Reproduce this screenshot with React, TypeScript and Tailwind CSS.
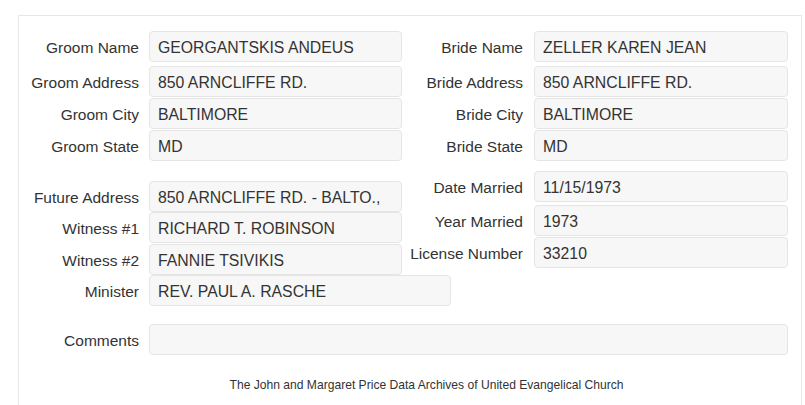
import React from "react";

const font = { fontFamily: '"Liberation Sans", Arial, sans-serif' };

function Box({ value, w }: { value: string; w: string }) {
  return (
    <div
      className={`${w} h-[31px] shrink-0 rounded-[4px] border border-[#e5e5e5] bg-[#f7f7f7] pl-[8px] pt-[2px] flex items-center text-[15.8px] text-[#333] whitespace-nowrap overflow-hidden`}
    >
      {value}
    </div>
  );
}

function Row({
  label,
  value,
  lw,
  gap,
  bw,
  mt,
}: {
  label: string;
  value: string;
  lw: string;
  gap: string;
  bw: string;
  mt: string;
}) {
  return (
    <div className={`flex items-center ${mt}`}>
      <div className={`${lw} ${gap} shrink-0 pt-[3px] text-right text-[15.5px] text-[#333] whitespace-nowrap`}>{label}</div>
      <Box value={value} w={bw} />
    </div>
  );
}

export default function App() {
  const L = (label: string, value: string, mt: string, bw = "w-[253px]") => (
    <Row label={label} value={value} lw="w-[120px]" gap="mr-[10px]" bw={bw} mt={mt} />
  );
  const R = (label: string, value: string, mt: string) => (
    <Row label={label} value={value} lw="w-[121px]" gap="mr-[11px]" bw="w-[254px]" mt={mt} />
  );
  return (
    <div className="w-[805px] h-[405px] overflow-hidden bg-white" style={font}>
      <div className="pt-[15px] pl-[18px]">
        <div className="w-[784px] h-[400px] border border-[#e6e6e6]">
          <div className="flex pt-[15px]">
            <div className="w-[383px] shrink-0 flex flex-col">
              {L("Groom Name", "GEORGANTSKIS ANDEUS", "mt-0")}
              {L("Groom Address", "850 ARNCLIFFE RD.", "mt-[4px]")}
              {L("Groom City", "BALTIMORE", "mt-[1px]")}
              {L("Groom State", "MD", "mt-[1px]")}
            </div>
            <div className="flex flex-col">
              {R("Bride Name", "ZELLER KAREN JEAN", "mt-0")}
              {R("Bride Address", "850 ARNCLIFFE RD.", "mt-[4px]")}
              {R("Bride City", "BALTIMORE", "mt-[1px]")}
              {R("Bride State", "MD", "mt-[1px]")}
            </div>
          </div>
          <div className="flex items-start">
            <div className="w-[383px] shrink-0 flex flex-col pt-[20px]">
              {L("Future Address", "850 ARNCLIFFE RD. - BALTO.,", "mt-0")}
              {L("Witness #1", "RICHARD T. ROBINSON", "mt-0")}
              {L("Witness #2", "FANNIE TSIVIKIS", "mt-[1px]")}
              {L("Minister", "REV. PAUL A. RASCHE", "mt-0", "w-[302px]")}
            </div>
            <div className="flex flex-col pt-[10px]">
              {R("Date Married", "11/15/1973", "mt-0")}
              {R("Year Married", "1973", "mt-[3px]")}
              {R("License Number", "33210", "mt-[1px]")}
            </div>
          </div>
          <div className="mt-[18px]">
            {L("Comments", "", "mt-0", "w-[639px]")}
          </div>
          <div className="mt-[22px] pl-[33px] text-center text-[12.1px] leading-[17px] text-[#333]">
            The John and Margaret Price Data Archives of United Evangelical Church
          </div>
        </div>
      </div>
    </div>
  );
}
